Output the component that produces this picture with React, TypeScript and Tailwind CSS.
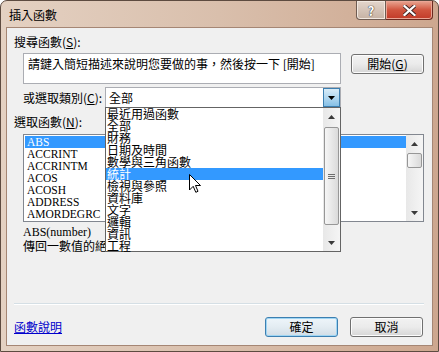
import React from "react";

const CJK = "font-['Noto_Sans_CJK_TC','Noto_Sans',sans-serif]";
const SERIF = "font-['Liberation_Serif','Noto_Sans_CJK_TC',serif]";

function Tri({ up }: { up?: boolean }) {
  return (
    <svg width="7" height="4" viewBox="0 0 7 4">
      {up ? <path d="M3.5 0 L7 4 L0 4Z" fill="#3a3a3a" /> : <path d="M0 0 L7 0 L3.5 4Z" fill="#3a3a3a" />}
    </svg>
  );
}

function Grip() {
  return (
    <div className="flex flex-col gap-[1px] items-center">
      <div className="w-[7px] h-[1px] bg-[#6d6d6d]" />
      <div className="w-[7px] h-[1px] bg-[#6d6d6d]" />
      <div className="w-[7px] h-[1px] bg-[#6d6d6d]" />
    </div>
  );
}

function Cursor() {
  return (
    <svg width="13" height="20" viewBox="0 0 13 20" className="absolute left-[189px] top-[174px]">
      <path d="M0.5 0.5 L0.5 16 L4.2 12.3 L6.8 18.3 L9 17.3 L6.5 11.5 L11.5 11.5 Z" fill="white" stroke="black" strokeWidth="1" strokeLinejoin="miter" />
    </svg>
  );
}

const categories = ["最近用過函數", "全部", "財務", "日期及時間", "數學與三角函數", "統計", "檢視與參照", "資料庫", "文字", "邏輯", "資訊", "工程"];
const funcs = ["ABS", "ACCRINT", "ACCRINTM", "ACOS", "ACOSH", "ADDRESS", "AMORDEGRC"];

function Btn({ label, focused, className }: { label: React.ReactNode; focused?: boolean; className?: string }) {
  return (
    <div
      className={
        "h-[20px] w-[73px] rounded-[3px] border flex items-center justify-center text-[12px] leading-[14px] text-black " +
        (focused
          ? "border-[#3c7fb1] bg-gradient-to-b from-[#eef5fa] via-[#e3ecf2] to-[#d2dde6] shadow-[inset_0_0_0_1px_#9fd5f3] "
          : "border-[#707070] bg-gradient-to-b from-[#f2f2f2] via-[#ebebeb] to-[#d6d6d6] shadow-[inset_0_0_0_1px_#fcfcfc] ") +
        (className ?? "")
      }
    >
      {label}
    </div>
  );
}

export default function App() {
  return (
    <div className={"w-[439px] h-[352px] bg-white relative " + CJK}>
      <div className="w-[439px] h-[352px] rounded-t-[7px] border border-[#5d4b40] bg-gradient-to-r from-[#e4d1c2] via-[#d9bfac] to-[#cda78f] flex flex-col">
        {/* title bar */}
        <div className="h-[26px] flex items-start justify-between">
          <div className="pl-[8px] pt-[7px] text-[12px] leading-[14px] text-black">插入函數</div>
          <div className="flex mr-[5px]">
            <div className="w-[30px] h-[19px] rounded-bl-[4px] border border-t-0 border-[#6f5c52] bg-gradient-to-b from-[#e4d6cc] to-[#c6b2a4] shadow-[inset_0_0_0_1px_#f2e8e0] flex items-center justify-center">
              <span className="text-[13px] leading-[13px] font-bold text-white [text-shadow:0_0_1px_#222,0_0_1px_#222]">?</span>
            </div>
            <div className="w-[47px] h-[19px] rounded-br-[4px] border border-l-0 border-t-0 border-[#6b2a20] bg-gradient-to-b from-[#e8a592] via-[#d0543e] to-[#c23a28] shadow-[inset_0_0_0_1px_#eba696] flex items-center justify-center">
              <svg width="13" height="11" viewBox="0 0 13 11">
                <path d="M1.5 1 L11.5 10 M11.5 1 L1.5 10" stroke="#3a2020" strokeWidth="4" strokeLinecap="square" />
                <path d="M1.5 1 L11.5 10 M11.5 1 L1.5 10" stroke="white" strokeWidth="2.2" strokeLinecap="square" />
              </svg>
            </div>
          </div>
        </div>

        {/* client */}
        <div className="ml-[5px] w-[427px] h-[319px] border border-[#a58674] bg-[#f0f0f0] relative flex flex-col">
          <div className="mt-[7px] ml-[7px] h-[14px] text-[12px] leading-[14px]">
            搜尋函數(<u>S</u>):
          </div>
          <div className="mt-[4px] flex items-start">
            <div className="ml-[16px] w-[318px] h-[31px] border border-[#abadb3] bg-white pl-[4px] pt-[3px] text-[12px] leading-[14px] whitespace-nowrap">
              請鍵入簡短描述來說明您要做的事，然後按一下 [開始]
            </div>
            <Btn className="ml-[10px] mt-[1px]" label={<span>開始(<u>G</u>)</span>} />
          </div>
          <div className="mt-[3px] flex items-center h-[21px]">
            <div className="ml-[16px] w-[82px] text-[12px] leading-[14px]">
              或選取類別(<u>C</u>):
            </div>
            <div className="w-[236px] h-[21px] border border-[#abadb3] bg-white flex items-center">
              <div className="flex-1 pl-[3px] text-[12px] leading-[14px]">全部</div>
              <div className="w-[17px] h-[19px] border border-[#3c7fb1] bg-gradient-to-b from-[#d8ecf8] via-[#b2d8f0] to-[#86c0e6] flex items-center justify-center">
                <svg width="7" height="4" viewBox="0 0 7 4"><path d="M0 0 L7 0 L3.5 4Z" fill="#000" /></svg>
              </div>
            </div>
          </div>
          <div className="mt-[7px] ml-[7px] h-[14px] text-[12px] leading-[14px]">
            選取函數(<u>N</u>):
          </div>
          {/* function list */}
          <div className="mt-[5px] ml-[16px] w-[401px] h-[88px] border border-[#828790] bg-white flex">
            <div className="flex-1 pt-[1px] pl-[1px]">
              {funcs.map((f, i) => (
                <div
                  key={f}
                  className={
                    "h-[12px] pl-[2px] text-[11.5px] leading-[12px] " + SERIF + (i === 0 ? " bg-[#3399ff] text-white" : " text-black")
                  }
                >
                  {f}
                </div>
              ))}
            </div>
            <div className="w-[17px] h-full bg-gradient-to-r from-[#e8e8e8] to-[#f5f5f5] flex flex-col">
              <div className="h-[17px] flex items-center justify-center"><Tri up /></div>
              <div className="mt-[1px] mx-[1px] h-[15px] rounded-[2px] border border-[#979797] bg-gradient-to-r from-[#f6f6f6] to-[#dadada]" />
              <div className="flex-1" />
              <div className="h-[17px] flex items-center justify-center"><Tri /></div>
            </div>
          </div>
          <div className={"mt-[3px] ml-[16px] h-[14px] text-[12px] leading-[14px] " + SERIF}>ABS(number)</div>
          <div className="ml-[16px] h-[14px] text-[12px] leading-[14px] whitespace-nowrap">傳回一數值的絕對值，即不帶正負號的數值。</div>

          <div className="mt-[50px] ml-[7px] w-[410px] h-[1px] bg-[#d5dfe5]" />
          <div className="ml-[7px] w-[410px] h-[1px] bg-white" />

          <div className="mt-[12px] flex items-center">
            <div className="ml-[7px] flex-1 text-[12px] leading-[14px] text-[#0000cc] underline">函數說明</div>
            <Btn focused label="確定" />
            <Btn className="ml-[12px] mr-[9px]" label="取消" />
          </div>

          {/* dropdown list overlay */}
          <div className="absolute left-[98px] top-[79px] w-[236px] h-[145px] border border-[#646464] bg-white flex">
            <div className="flex-1 pl-[0px]">
              {categories.map((c, i) => (
                <div
                  key={c}
                  className={"h-[12px] pl-[1px] text-[12px] leading-[12px] whitespace-nowrap " + (i === 5 ? "bg-[#3399ff] text-white" : "text-black")}
                >
                  {c}
                </div>
              ))}
            </div>
            <div className="w-[17px] h-full bg-gradient-to-r from-[#e8e8e8] to-[#f5f5f5] flex flex-col">
              <div className="h-[17px] flex items-center justify-center"><Tri up /></div>
              <div className="mt-[2px] mx-[1px] h-[98px] rounded-[2px] border border-[#979797] bg-gradient-to-r from-[#f6f6f6] to-[#dadada] flex items-center justify-center">
                <Grip />
              </div>
              <div className="flex-1" />
              <div className="h-[16px] flex items-center justify-center"><Tri /></div>
            </div>
          </div>
        </div>
      </div>
      <Cursor />
    </div>
  );
}
